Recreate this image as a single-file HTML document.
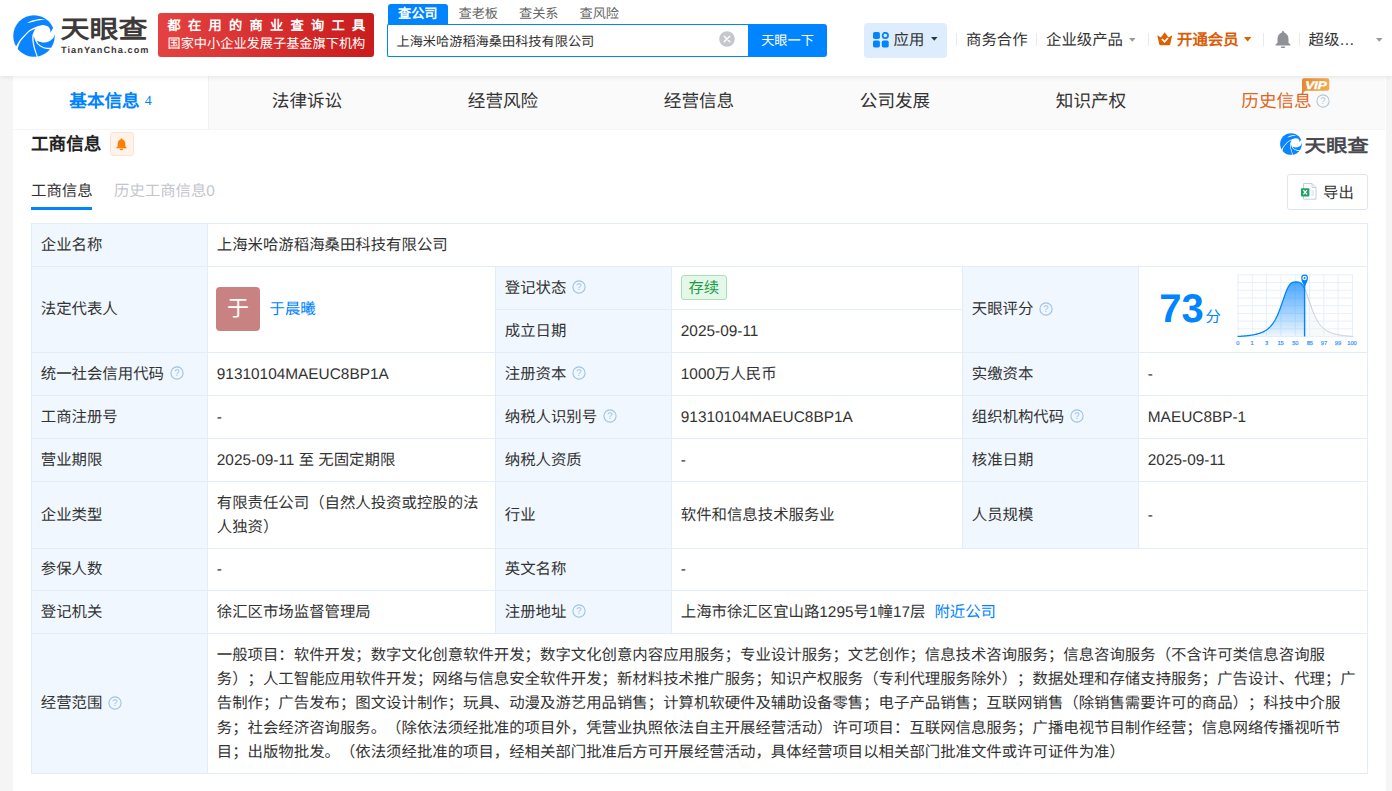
<!DOCTYPE html>
<html lang="zh-CN">
<head>
<meta charset="utf-8">
<title>天眼查</title>
<style>
*{box-sizing:border-box;margin:0;padding:0}
html,body{width:1392px;height:791px;overflow:hidden}
body{font-family:"Liberation Sans",sans-serif;background:#f5f5f5;color:#333;font-size:15.4px;position:relative;text-spacing-trim:space-all;text-rendering:geometricPrecision}
.abs{position:absolute}
.nw{white-space:nowrap}
#hdr{position:absolute;left:0;top:0;width:1392px;height:76px;background:#fff;box-shadow:0 1px 5px rgba(0,0,0,.09);z-index:5}
#hdr .nav{position:absolute;top:29px;height:24px;line-height:24px;font-size:15.4px;color:#333;white-space:nowrap}
#hdr .sep{position:absolute;top:33px;width:1px;height:13px;background:#e6e9ee}
.stab{position:absolute;top:4px;width:60.5px;height:20px;line-height:19px;text-align:center;font-size:13.2px;color:#666;white-space:nowrap}
.stab.on{background:#0084ff;color:#fff;font-weight:bold;border-radius:3px 3px 0 0}
#card{position:absolute;left:13px;top:76px;width:1373px;height:715px;background:#fff}
#tabs{position:absolute;left:0;top:0;width:1372px;height:52.5px;background:#fafafa;display:flex;box-shadow:0 1px 0 #f6f6f6}
#tabs .t{width:196px;height:52.5px;line-height:50px;text-align:center;font-size:17.6px;color:#333;white-space:nowrap}
#tabs .t.on{background:#fff;color:#0084ff;font-weight:bold;border-right:1px solid #f1f1f1}
#tabs .t.on small{font-family:"Liberation Serif",serif;font-weight:normal;font-size:14px;margin-left:5px;position:relative;top:-2px}
#tabs .t.vip{color:#e0661a}
h2{position:absolute;left:18px;top:56px;font-size:17.6px;line-height:24px;font-weight:bold;color:#222;white-space:nowrap}
table{position:absolute;left:18px;top:147px;width:1336px;border-collapse:collapse;table-layout:fixed}
td{border:1px solid #e3edf7;padding:2px 8.8px 0;font-size:15.4px;line-height:24.2px;color:#333;vertical-align:middle;background:#fff}
td.l{background:#f0f7fe}
.q{display:inline-block;margin-left:6px;vertical-align:-1.5px}
a{color:#0084ff;text-decoration:none}
.tag{display:inline-block;width:46px;height:25px;line-height:25.5px;text-align:center;border:1px solid #a9e0b9;background:#e4f8ea;color:#1d9c45;border-radius:3px;font-size:15.4px;vertical-align:middle;position:relative;top:-2px}
</style>
</head>
<body>
<svg width="0" height="0" style="position:absolute"><defs><symbol id="lg" viewBox="0 0 42 42"><clipPath id="lgc"><circle cx="21" cy="21" r="20.75"/></clipPath><g clip-path="url(#lgc)" fill="#0a85ff"><path d="M2.12,33.37C2.83,32.11 4.91,27.94 6.39,25.80C7.87,23.66 9.36,22.29 11.00,20.54C12.64,18.79 14.40,16.65 16.26,15.28C18.13,13.91 20.48,13.06 22.18,12.32C23.88,11.57 24.98,11.16 26.46,10.80C27.94,10.44 29.62,10.02 31.07,10.14C32.51,10.27 34.14,10.78 35.14,11.53C36.15,12.27 36.72,13.61 37.12,14.62C37.51,15.63 37.45,17.09 37.51,17.58L37.51,17.58C37.73,17.20 38.37,16.08 38.83,15.28C39.29,14.48 39.71,13.87 40.28,12.78C40.85,11.68 41.92,9.38 42.25,8.70L46.20,8.70L46.20,-4.46L-5.12,-4.46L-5.12,36.33Z"/><path d="M4.09,35.01C4.63,33.63 6.04,28.99 7.32,26.72C8.59,24.45 10.12,23.14 11.72,21.39C13.32,19.65 15.14,17.55 16.92,16.26C18.70,14.98 21.47,14.12 22.38,13.70L22.38,13.83C22.02,14.51 20.74,16.57 20.21,17.91C19.68,19.25 19.30,20.10 19.22,21.86C19.15,23.61 19.39,26.24 19.75,28.43C20.11,30.63 20.71,32.77 21.39,35.01C22.07,37.26 23.42,40.77 23.83,41.92L23.63,46.86L-1.17,46.86L-1.17,35.01Z"/><path d="M20.67,20.87C20.68,21.91 20.45,24.87 20.74,27.12C21.02,29.37 21.68,31.89 22.38,34.36C23.08,36.82 24.52,40.66 24.95,41.92L25.14,46.86L42.25,46.86L42.25,35.01L38.30,34.49C37.32,34.38 34.14,34.27 32.38,33.83C30.63,33.39 29.20,32.75 27.78,31.86C26.35,30.96 24.82,29.66 23.83,28.43C22.84,27.21 22.37,25.75 21.86,24.49C21.34,23.23 20.92,21.47 20.74,20.87Z"/><path d="M23.83,25.47C24.16,25.66 24.71,26.24 25.80,26.59C26.90,26.94 28.76,27.60 30.41,27.58C32.05,27.56 34.14,27.09 35.67,26.46C37.21,25.84 38.58,25.04 39.62,23.83C40.66,22.62 41.54,19.99 41.92,19.22L46.20,19.22L46.20,35.01L38.30,35.01L38.30,32.84C37.64,32.82 35.78,32.90 34.36,32.71C32.93,32.52 31.18,32.33 29.75,31.72C28.32,31.12 26.79,30.13 25.80,29.09C24.82,28.05 24.16,26.08 23.83,25.47Z"/><path d="M13.96,8.04C14.51,7.74 16.04,6.78 17.25,6.26C18.46,5.75 19.66,5.32 21.20,4.95C22.73,4.57 24.54,4.20 26.46,4.03C28.38,3.85 31.67,3.92 32.71,3.89L32.71,4.03C31.67,4.23 28.38,4.87 26.46,5.28C24.54,5.68 22.73,6.09 21.20,6.46C19.66,6.83 18.46,7.25 17.25,7.51C16.04,7.78 14.51,7.95 13.96,8.04Z" fill="#fff"/></g></symbol></defs></svg>
<div id="hdr">
  <svg class="abs" style="left:13px;top:14.5px" width="42" height="42"><use href="#lg"/></svg>
  <div class="abs nw" id="lgt" style="left:60.5px;top:11.3px;font-size:29px;line-height:38px;font-weight:bold;color:#3e3a39;transform-origin:0 50%;transform:scale(1,.86)">天眼查</div>
  <div class="abs nw" id="lgs" style="left:61px;top:43.6px;font-size:9.2px;line-height:12px;font-weight:bold;color:#3e3a39;letter-spacing:1.05px">TianYanCha.com</div>
  <div class="abs" style="left:158px;top:13px;width:216px;height:44px;border-radius:3px;background:linear-gradient(90deg,#e44242,#ca1c1c);color:#fff;font-size:13.2px;white-space:nowrap">
    <div class="abs" style="left:9.5px;top:3.5px;line-height:17px;font-weight:bold;letter-spacing:7.3px">都在用的商业查询工具</div>
    <div class="abs" style="left:9.5px;top:21.5px;line-height:17px">国家中小企业发展子基金旗下机构</div>
  </div>
  <div class="stab on" style="left:387.5px">查公司</div>
  <div class="stab" style="left:448px">查老板</div>
  <div class="stab" style="left:508.5px">查关系</div>
  <div class="stab" style="left:569px">查风险</div>
  <div class="abs nw" style="left:387px;top:24px;width:362px;height:33px;border:1.5px solid #0084ff;border-right:0;border-radius:2px 0 0 2px;background:#fff;font-size:13.2px;line-height:33.5px;padding-left:8.5px;color:#333">上海米哈游稻海桑田科技有限公司</div>
  <svg class="abs" style="left:718.8px;top:31.2px" width="16" height="16" viewBox="0 0 16 16"><circle cx="8" cy="8" r="7.8" fill="#c6c7cc"/><path d="M5.2,5.2L10.8,10.8M10.8,5.2L5.2,10.8" stroke="#fff" stroke-width="1.4" stroke-linecap="round"/></svg>
  <div class="abs nw" style="left:748px;top:24px;width:79px;height:33px;background:#0084ff;border-radius:0 3px 3px 0;color:#fff;font-size:13.2px;line-height:34px;text-align:center">天眼一下</div>

  <div class="abs" style="left:864px;top:23px;width:83px;height:35px;border-radius:4px;background:#deedfd"></div>
  <svg class="abs" style="left:873.3px;top:32.4px" width="16" height="16" viewBox="0 0 16 16"><rect x="0" y="0" width="6.9" height="6.9" rx="1.7" fill="#0084ff"/><rect x="0" y="8.6" width="6.9" height="6.9" rx="1.7" fill="#0084ff"/><rect x="8.8" y="8.6" width="6.9" height="6.9" rx="1.7" fill="#0084ff"/><circle cx="12.3" cy="3.5" r="2.7" fill="none" stroke="#0084ff" stroke-width="1.8"/></svg>
  <div class="nav" style="left:893.5px">应用</div>
  <svg class="abs" style="left:930.8px;top:37.3px" width="7" height="4" viewBox="0 0 7 4"><path d="M0,0H6.6L3.3,3.8Z" fill="#333"/></svg>
  <div class="sep" style="left:956px"></div>
  <div class="nav" style="left:966px">商务合作</div>
  <div class="sep" style="left:1036px"></div>
  <div class="nav" style="left:1046px">企业级产品</div>
  <svg class="abs" style="left:1128.5px;top:37.5px" width="7" height="4" viewBox="0 0 7 4"><path d="M0,0H6.6L3.3,3.8Z" fill="#999"/></svg>
  <div class="sep" style="left:1147.5px"></div>
  <svg class="abs" style="left:1157px;top:32px" width="16" height="14" viewBox="0 0 16 14"><path d="M0.3,3.2 L3.9,5.4 L7.7,0.2 L11.5,5.4 L15.2,3.2 L13.3,12 Q13.1,13.2 12,13.2 H3.5 Q2.4,13.2 2.2,12Z" fill="#dc6000"/><path d="M4.9,7 L7.6,9.7 L10.9,6" fill="none" stroke="#fff" stroke-width="1.7"/></svg>
  <div class="nav" style="left:1177px;font-weight:bold;color:#d95f0a">开通会员</div>
  <svg class="abs" style="left:1243.8px;top:37.3px" width="8" height="5" viewBox="0 0 8 5"><path d="M0,0H7.4L3.7,4.4Z" fill="#dc6000"/></svg>
  <div class="sep" style="left:1263px"></div>
  <svg class="abs" style="left:1274.5px;top:31px" width="16" height="17.5" viewBox="0 0 16 17.5"><path d="M8,0 a1.1,1.1 0 0 1 1.1,1.1 v0.5 C12,2.4 13.5,5 13.5,8 V11.8 L15.4,13.6 V14.4 H0.6 V13.6 L2.5,11.8 V8 C2.5,5 4,2.4 6.9,1.6 v-0.5 A1.1,1.1 0 0 1 8,0Z" fill="#8e9297"/><rect x="5.8" y="15.6" width="4.4" height="1.4" rx=".7" fill="#8e9297"/></svg>
  <div class="sep" style="left:1299px"></div>
  <div class="nav" style="left:1308.5px">超级<span lang="en" style="font-family:'Liberation Sans'">&#8230;</span></div>
  <svg class="abs" style="left:1375.5px;top:37.5px" width="7" height="4" viewBox="0 0 7 4"><path d="M0,0H6.6L3.3,3.8Z" fill="#999"/></svg>
</div>
<div id="card">
  <div id="tabs">
    <div class="t on">基本信息<small>4</small></div>
    <div class="t">法律诉讼</div>
    <div class="t">经营风险</div>
    <div class="t">经营信息</div>
    <div class="t">公司发展</div>
    <div class="t">知识产权</div>
    <div class="t vip"><span style="position:relative;left:-10.5px">历史信息</span></div>
  </div>
  <h2>工商信息</h2>
  <div class="abs" style="left:97px;top:56px;width:24px;height:24px;border:1px solid #fde3cf;background:#fff3e9;border-radius:3px"></div>
  <svg class="abs" style="left:103px;top:62px" width="11" height="12.5" viewBox="0 0 16 17.5"><path d="M8,0 a1.1,1.1 0 0 1 1.1,1.1 v0.5 C12,2.4 13.5,5 13.5,8 V11.8 L15.4,13.6 V14.4 H0.6 V13.6 L2.5,11.8 V8 C2.5,5 4,2.4 6.9,1.6 v-0.5 A1.1,1.1 0 0 1 8,0Z" fill="#ff7d00"/><path d="M5.4,15.2 H10.6 A2.6,2.3 0 0 1 5.4,15.2Z" fill="#ff7d00"/></svg>
  <div class="abs nw" style="left:18px;top:103.5px;line-height:24px;font-size:15.4px;color:#333">工商信息</div>
  <div class="abs" style="left:18px;top:131px;width:61px;height:3px;background:#0084ff"></div>
  <div class="abs nw" style="left:101px;top:103.5px;line-height:24px;font-size:15.4px;color:#c3c6cc">历史工商信息0</div>
  <div class="abs nw" style="left:1274px;top:98px;width:81px;height:36px;border:1px solid #dfe4ee;border-radius:3px;font-size:15.4px;line-height:37.5px;padding-left:35px;color:#333">导出</div>
  <svg class="abs" style="left:1288.3px;top:107px" width="16" height="17" viewBox="0 0 16 17"><path d="M2.5,0.5 H11 L15,4.5 V16.2 H2.5Z" fill="#fff" stroke="#c9ced6" stroke-width="1"/><path d="M11,0.5 V4.5 H15" fill="none" stroke="#c9ced6" stroke-width="1"/><path d="M10.5,8H13M10.5,10H13M10.5,12H13" stroke="#d5d9e0" stroke-width="1"/><rect x="0" y="5.2" width="8.4" height="8.2" rx=".6" fill="#21a366"/><path d="M2.4,7.2L6,11.4M6,7.2L2.4,11.4" stroke="#fff" stroke-width="1.3"/></svg>
  <svg class="abs" style="left:1267px;top:57px" width="22" height="22"><use href="#lg"/></svg>
  <div class="abs nw" id="wmt" style="left:1291.5px;top:55.5px;font-size:21.4px;line-height:28px;font-weight:bold;color:#4a4a50;transform-origin:0 50%;transform:scale(1,.84)">天眼查</div>
  <table>
    <colgroup><col style="width:176px"><col style="width:288px"><col style="width:176px"><col style="width:291px"><col style="width:176px"><col style="width:229px"></colgroup>
    <tr style="height:43px"><td class="l">企业名称</td><td colspan="5">上海米哈游稻海桑田科技有限公司</td></tr>
    <tr style="height:43px"><td class="l" rowspan="2">法定代表人</td><td rowspan="2"></td><td class="l">登记状态<svg class="q" width="14" height="14" viewBox="0 0 14 14"><circle cx="7" cy="7" r="6.1" fill="none" stroke="#9dc3e6" stroke-width="1.1"/><text x="7" y="10.4" text-anchor="middle" font-family="Liberation Sans, sans-serif" font-size="9.5" fill="#9dc3e6">?</text></svg></td><td><span class="tag">存续</span></td><td class="l" rowspan="2">天眼评分<svg class="q" width="14" height="14" viewBox="0 0 14 14"><circle cx="7" cy="7" r="6.1" fill="none" stroke="#9dc3e6" stroke-width="1.1"/><text x="7" y="10.4" text-anchor="middle" font-family="Liberation Sans, sans-serif" font-size="9.5" fill="#9dc3e6">?</text></svg></td><td rowspan="2"></td></tr>
    <tr style="height:43px"><td class="l">成立日期</td><td>2025-09-11</td></tr>
    <tr style="height:43px"><td class="l">统一社会信用代码<svg class="q" width="14" height="14" viewBox="0 0 14 14"><circle cx="7" cy="7" r="6.1" fill="none" stroke="#9dc3e6" stroke-width="1.1"/><text x="7" y="10.4" text-anchor="middle" font-family="Liberation Sans, sans-serif" font-size="9.5" fill="#9dc3e6">?</text></svg></td><td>91310104MAEUC8BP1A</td><td class="l">注册资本<svg class="q" width="14" height="14" viewBox="0 0 14 14"><circle cx="7" cy="7" r="6.1" fill="none" stroke="#9dc3e6" stroke-width="1.1"/><text x="7" y="10.4" text-anchor="middle" font-family="Liberation Sans, sans-serif" font-size="9.5" fill="#9dc3e6">?</text></svg></td><td>1000万人民币</td><td class="l">实缴资本</td><td>-</td></tr>
    <tr style="height:43px"><td class="l">工商注册号</td><td>-</td><td class="l">纳税人识别号<svg class="q" width="14" height="14" viewBox="0 0 14 14"><circle cx="7" cy="7" r="6.1" fill="none" stroke="#9dc3e6" stroke-width="1.1"/><text x="7" y="10.4" text-anchor="middle" font-family="Liberation Sans, sans-serif" font-size="9.5" fill="#9dc3e6">?</text></svg></td><td>91310104MAEUC8BP1A</td><td class="l">组织机构代码<svg class="q" width="14" height="14" viewBox="0 0 14 14"><circle cx="7" cy="7" r="6.1" fill="none" stroke="#9dc3e6" stroke-width="1.1"/><text x="7" y="10.4" text-anchor="middle" font-family="Liberation Sans, sans-serif" font-size="9.5" fill="#9dc3e6">?</text></svg></td><td>MAEUC8BP-1</td></tr>
    <tr style="height:43px"><td class="l">营业期限</td><td>2025-09-11 至 无固定期限</td><td class="l">纳税人资质</td><td>-</td><td class="l">核准日期</td><td>2025-09-11</td></tr>
    <tr style="height:67px"><td class="l">企业类型</td><td>有限责任公司（自然人投资或控股的法人独资）</td><td class="l">行业</td><td>软件和信息技术服务业</td><td class="l">人员规模</td><td>-</td></tr>
    <tr style="height:42px"><td class="l">参保人数</td><td>-</td><td class="l">英文名称</td><td colspan="3">-</td></tr>
    <tr style="height:43px"><td class="l">登记机关</td><td>徐汇区市场监督管理局</td><td class="l">注册地址<svg class="q" width="14" height="14" viewBox="0 0 14 14"><circle cx="7" cy="7" r="6.1" fill="none" stroke="#9dc3e6" stroke-width="1.1"/><text x="7" y="10.4" text-anchor="middle" font-family="Liberation Sans, sans-serif" font-size="9.5" fill="#9dc3e6">?</text></svg></td><td colspan="3">上海市徐汇区宜山路1295号1幢17层<a style="margin-left:9px">附近公司</a></td></tr>
    <tr style="height:140px"><td class="l">经营范围<svg class="q" width="14" height="14" viewBox="0 0 14 14"><circle cx="7" cy="7" r="6.1" fill="none" stroke="#9dc3e6" stroke-width="1.1"/><text x="7" y="10.4" text-anchor="middle" font-family="Liberation Sans, sans-serif" font-size="9.5" fill="#9dc3e6">?</text></svg></td><td colspan="5">一般项目：软件开发；数字文化创意软件开发；数字文化创意内容应用服务；专业设计服务；文艺创作；信息技术咨询服务；信息咨询服务（不含许可类信息咨询服务）；人工智能应用软件开发；网络与信息安全软件开发；新材料技术推广服务；知识产权服务（专利代理服务除外）；数据处理和存储支持服务；广告设计、代理；广告制作；广告发布；图文设计制作；玩具、动漫及游艺用品销售；计算机软硬件及辅助设备零售；电子产品销售；互联网销售（除销售需要许可的商品）；科技中介服务；社会经济咨询服务。（除依法须经批准的项目外，凭营业执照依法自主开展经营活动）许可项目：互联网信息服务；广播电视节目制作经营；信息网络传播视听节目；出版物批发。（依法须经批准的项目，经相关部门批准后方可开展经营活动，具体经营项目以相关部门批准文件或许可证件为准）</td></tr>
  </table>
</div>
<div id="ov" class="abs" style="left:0;top:0;width:1392px;height:791px;pointer-events:none">
  <div class="abs" style="left:216px;top:287px;width:44px;height:44px;border-radius:4px;background:#c98282;color:#fff;font-size:22px;line-height:43px;text-align:center">于</div>
  <a class="abs nw" style="left:269.5px;top:297.5px;line-height:24px;font-size:15.4px">于晨曦</a>
  <div class="abs nw" style="left:1159.3px;top:285.6px;font-size:40px;line-height:46px;font-weight:bold;color:#0084ff">73</div>
  <div class="abs nw" style="left:1205.5px;top:305.5px;font-size:15.4px;line-height:24px;color:#0084ff">分</div>
  <svg class="abs" style="left:1230px;top:270px" width="135" height="80" viewBox="0 0 135 80">
<defs><linearGradient id="g1" x1="0" y1="0" x2="0" y2="1"><stop offset="0" stop-color="#0084ff" stop-opacity=".72"/><stop offset="1" stop-color="#0084ff" stop-opacity=".07"/></linearGradient></defs>
<g stroke="#e6f0fb" stroke-width="1" fill="none"><path d="M8.0,4.5V66.5"/><path d="M22.3,4.5V66.5"/><path d="M36.6,4.5V66.5"/><path d="M50.9,4.5V66.5"/><path d="M65.2,4.5V66.5"/><path d="M79.5,4.5V66.5"/><path d="M93.8,4.5V66.5"/><path d="M108.1,4.5V66.5"/><path d="M122.4,4.5V66.5"/><path d="M7.0,4.8H123.3"/><path d="M7.0,12.5H123.3"/><path d="M7.0,20.2H123.3"/><path d="M7.0,28.0H123.3"/><path d="M7.0,35.7H123.3"/><path d="M7.0,43.4H123.3"/><path d="M7.0,51.1H123.3"/><path d="M7.0,58.8H123.3"/><path d="M7.0,66.6H123.3"/></g>
<path d="M74.60,18.72 L75.10,19.83 L75.60,21.02 L76.11,22.28 L76.61,23.60 L77.11,24.97 L77.61,26.38 L78.11,27.82 L78.62,29.28 L79.12,30.75 L79.62,32.22 L80.12,33.69 L80.62,35.13 L81.13,36.56 L81.63,37.95 L82.13,39.31 L82.63,40.62 L83.14,41.90 L83.64,43.13 L84.14,44.31 L84.64,45.45 L85.14,46.53 L85.65,47.57 L86.15,48.56 L86.65,49.50 L87.15,50.39 L87.65,51.24 L88.16,52.05 L88.66,52.81 L89.16,53.53 L89.66,54.22 L90.16,54.86 L90.67,55.47 L91.17,56.05 L91.67,56.60 L92.17,57.12 L92.67,57.60 L93.18,58.07 L93.68,58.50 L94.18,58.92 L94.68,59.31 L95.18,59.67 L95.69,60.02 L96.19,60.35 L96.69,60.67 L97.19,60.96 L97.69,61.24 L98.20,61.51 L98.70,61.76 L99.20,62.00 L99.70,62.23 L100.21,62.44 L100.71,62.65 L101.21,62.84 L101.71,63.02 L102.21,63.20 L102.72,63.37 L103.22,63.53 L103.72,63.68 L104.22,63.82 L104.72,63.96 L105.23,64.09 L105.73,64.21 L106.23,64.33 L106.73,64.44 L107.23,64.55 L107.74,64.66 L108.24,64.75 L108.74,64.85 L109.24,64.94 L109.74,65.03 L110.25,65.11 L110.75,65.19 L111.25,65.26 L111.75,65.34 L112.25,65.40 L112.76,65.47 L113.26,65.54 L113.76,65.60 L114.26,65.66 L114.76,65.71 L115.27,65.77 L115.77,65.82 L116.27,65.87 L116.77,65.92 L117.28,65.96 L117.78,66.01 L118.28,66.05 L118.78,66.09 L119.28,66.13 L119.79,66.17 L120.29,66.21 L120.79,66.25 L121.29,66.28 L121.79,66.31 L122.30,66.35 L122.80,66.38 L123.30,66.41 L74.6,66.5Z" fill="#eef1f6" fill-opacity=".45" stroke="none"/>
<path d="M74.60,18.72 L75.10,19.83 L75.60,21.02 L76.11,22.28 L76.61,23.60 L77.11,24.97 L77.61,26.38 L78.11,27.82 L78.62,29.28 L79.12,30.75 L79.62,32.22 L80.12,33.69 L80.62,35.13 L81.13,36.56 L81.63,37.95 L82.13,39.31 L82.63,40.62 L83.14,41.90 L83.64,43.13 L84.14,44.31 L84.64,45.45 L85.14,46.53 L85.65,47.57 L86.15,48.56 L86.65,49.50 L87.15,50.39 L87.65,51.24 L88.16,52.05 L88.66,52.81 L89.16,53.53 L89.66,54.22 L90.16,54.86 L90.67,55.47 L91.17,56.05 L91.67,56.60 L92.17,57.12 L92.67,57.60 L93.18,58.07 L93.68,58.50 L94.18,58.92 L94.68,59.31 L95.18,59.67 L95.69,60.02 L96.19,60.35 L96.69,60.67 L97.19,60.96 L97.69,61.24 L98.20,61.51 L98.70,61.76 L99.20,62.00 L99.70,62.23 L100.21,62.44 L100.71,62.65 L101.21,62.84 L101.71,63.02 L102.21,63.20 L102.72,63.37 L103.22,63.53 L103.72,63.68 L104.22,63.82 L104.72,63.96 L105.23,64.09 L105.73,64.21 L106.23,64.33 L106.73,64.44 L107.23,64.55 L107.74,64.66 L108.24,64.75 L108.74,64.85 L109.24,64.94 L109.74,65.03 L110.25,65.11 L110.75,65.19 L111.25,65.26 L111.75,65.34 L112.25,65.40 L112.76,65.47 L113.26,65.54 L113.76,65.60 L114.26,65.66 L114.76,65.71 L115.27,65.77 L115.77,65.82 L116.27,65.87 L116.77,65.92 L117.28,65.96 L117.78,66.01 L118.28,66.05 L118.78,66.09 L119.28,66.13 L119.79,66.17 L120.29,66.21 L120.79,66.25 L121.29,66.28 L121.79,66.31 L122.30,66.35 L122.80,66.38 L123.30,66.41" fill="none" stroke="#c3cbd6" stroke-width="1"/>
<path d="M7.60,66.47 L8.10,66.44 L8.60,66.41 L9.10,66.38 L9.60,66.35 L10.10,66.32 L10.60,66.29 L11.10,66.25 L11.60,66.22 L12.10,66.18 L12.60,66.14 L13.10,66.10 L13.60,66.06 L14.10,66.02 L14.60,65.98 L15.10,65.93 L15.60,65.88 L16.10,65.83 L16.60,65.78 L17.10,65.73 L17.60,65.67 L18.10,65.61 L18.60,65.55 L19.10,65.49 L19.60,65.42 L20.10,65.36 L20.60,65.28 L21.10,65.21 L21.60,65.13 L22.10,65.05 L22.60,64.97 L23.10,64.88 L23.60,64.78 L24.10,64.69 L24.60,64.59 L25.10,64.48 L25.60,64.37 L26.10,64.25 L26.60,64.13 L27.10,64.00 L27.60,63.87 L28.10,63.73 L28.60,63.58 L29.10,63.43 L29.60,63.26 L30.10,63.09 L30.60,62.91 L31.10,62.72 L31.60,62.52 L32.10,62.31 L32.60,62.09 L33.10,61.86 L33.60,61.61 L34.10,61.35 L34.60,61.08 L35.10,60.79 L35.60,60.49 L36.10,60.17 L36.60,59.83 L37.10,59.47 L37.60,59.09 L38.10,58.69 L38.60,58.26 L39.10,57.82 L39.60,57.34 L40.10,56.84 L40.60,56.31 L41.10,55.75 L41.60,55.15 L42.10,54.53 L42.60,53.86 L43.10,53.16 L43.60,52.42 L44.10,51.64 L44.60,50.82 L45.10,49.95 L45.60,49.04 L46.10,48.08 L46.60,47.07 L47.10,46.01 L47.60,44.91 L48.10,43.76 L48.60,42.56 L49.10,41.31 L49.60,40.02 L50.10,38.69 L50.60,37.32 L51.10,35.92 L51.60,34.49 L52.10,33.04 L52.60,31.58 L53.10,30.11 L53.60,28.65 L54.10,27.20 L54.60,25.78 L55.10,24.39 L55.60,23.04 L56.10,21.75 L56.60,20.53 L57.10,19.38 L57.60,18.30 L58.10,17.32 L58.60,16.42 L59.10,15.61 L59.60,14.90 L60.10,14.28 L60.60,13.75 L61.10,13.31 L61.60,12.94 L62.10,12.65 L62.60,12.43 L63.10,12.26 L63.60,12.15 L64.10,12.07 L64.60,12.03 L65.10,12.01 L65.60,12.00 L66.10,12.00 L66.60,12.00 L67.10,12.01 L67.60,12.04 L68.10,12.10 L68.60,12.19 L69.10,12.32 L69.60,12.51 L70.10,12.76 L70.60,13.08 L71.10,13.47 L71.60,13.95 L72.10,14.52 L72.60,15.17 L73.10,15.92 L73.60,16.77 L74.10,17.70 L74.60,18.72 L74.6,66.5 L7.6,66.5Z" fill="url(#g1)" stroke="none"/>
<path d="M7.60,66.47 L8.10,66.44 L8.60,66.41 L9.10,66.38 L9.60,66.35 L10.10,66.32 L10.60,66.29 L11.10,66.25 L11.60,66.22 L12.10,66.18 L12.60,66.14 L13.10,66.10 L13.60,66.06 L14.10,66.02 L14.60,65.98 L15.10,65.93 L15.60,65.88 L16.10,65.83 L16.60,65.78 L17.10,65.73 L17.60,65.67 L18.10,65.61 L18.60,65.55 L19.10,65.49 L19.60,65.42 L20.10,65.36 L20.60,65.28 L21.10,65.21 L21.60,65.13 L22.10,65.05 L22.60,64.97 L23.10,64.88 L23.60,64.78 L24.10,64.69 L24.60,64.59 L25.10,64.48 L25.60,64.37 L26.10,64.25 L26.60,64.13 L27.10,64.00 L27.60,63.87 L28.10,63.73 L28.60,63.58 L29.10,63.43 L29.60,63.26 L30.10,63.09 L30.60,62.91 L31.10,62.72 L31.60,62.52 L32.10,62.31 L32.60,62.09 L33.10,61.86 L33.60,61.61 L34.10,61.35 L34.60,61.08 L35.10,60.79 L35.60,60.49 L36.10,60.17 L36.60,59.83 L37.10,59.47 L37.60,59.09 L38.10,58.69 L38.60,58.26 L39.10,57.82 L39.60,57.34 L40.10,56.84 L40.60,56.31 L41.10,55.75 L41.60,55.15 L42.10,54.53 L42.60,53.86 L43.10,53.16 L43.60,52.42 L44.10,51.64 L44.60,50.82 L45.10,49.95 L45.60,49.04 L46.10,48.08 L46.60,47.07 L47.10,46.01 L47.60,44.91 L48.10,43.76 L48.60,42.56 L49.10,41.31 L49.60,40.02 L50.10,38.69 L50.60,37.32 L51.10,35.92 L51.60,34.49 L52.10,33.04 L52.60,31.58 L53.10,30.11 L53.60,28.65 L54.10,27.20 L54.60,25.78 L55.10,24.39 L55.60,23.04 L56.10,21.75 L56.60,20.53 L57.10,19.38 L57.60,18.30 L58.10,17.32 L58.60,16.42 L59.10,15.61 L59.60,14.90 L60.10,14.28 L60.60,13.75 L61.10,13.31 L61.60,12.94 L62.10,12.65 L62.60,12.43 L63.10,12.26 L63.60,12.15 L64.10,12.07 L64.60,12.03 L65.10,12.01 L65.60,12.00 L66.10,12.00 L66.60,12.00 L67.10,12.01 L67.60,12.04 L68.10,12.10 L68.60,12.19 L69.10,12.32 L69.60,12.51 L70.10,12.76 L70.60,13.08 L71.10,13.47 L71.60,13.95 L72.10,14.52 L72.60,15.17 L73.10,15.92 L73.60,16.77 L74.10,17.70 L74.60,18.72" fill="none" stroke="#0084ff" stroke-width="1.3"/>
<path d="M74.6,14.0V66.5" stroke="#0084ff" stroke-width="1.4"/>
<path d="M74.6,17.5 C73.6,14.0 71.2,11.5 71.2,8.0 a3.4,3.4 0 1 1 6.8,0 C78.0,11.5 75.6,14.0 74.6,17.5Z" fill="#0084ff"/>
<circle cx="74.6" cy="8.0" r="2.2" fill="#fff"/><circle cx="74.6" cy="8.0" r="1.05" fill="#0084ff"/>
<g font-family="Liberation Sans, sans-serif" font-size="5.7" fill="#2a90ff" stroke="#2a90ff" stroke-width=".18" text-anchor="middle"><text x="7.8" y="75.2">0</text><text x="22.0" y="75.2">1</text><text x="36.6" y="75.2">3</text><text x="50.6" y="75.2">15</text><text x="65.3" y="75.2">50</text><text x="79.8" y="75.2">85</text><text x="94.0" y="75.2">97</text><text x="108.0" y="75.2">99</text><text x="122.0" y="75.2">100</text></g>
</svg>
  <svg class="abs" style="left:1301px;top:78px" width="29" height="16" viewBox="0 0 29 16"><defs><linearGradient id="g2" x1="0" y1="0" x2="1" y2="0"><stop offset="0" stop-color="#e48a2c"/><stop offset="1" stop-color="#f2ad55"/></linearGradient></defs><path d="M3,0.3 H26 Q28.3,0.3 28.3,2.6 V10.4 Q28.3,12.7 26,12.7 H4.6 L1,15.6 V2.3 Q1,0.3 3,0.3Z" fill="url(#g2)"/><text x="4.2" y="10.6" textLength="21.5" lengthAdjust="spacingAndGlyphs" font-family="Liberation Sans, sans-serif" font-size="11" font-weight="bold" font-style="italic" fill="#fff" stroke="#fff" stroke-width=".4">VIP</text></svg>
  <svg class="abs" style="left:1316.3px;top:93.8px" width="14" height="14" viewBox="0 0 14 14"><circle cx="7" cy="7" r="6.1" fill="none" stroke="#b3c7da" stroke-width="1.1"/><text x="7" y="10.4" text-anchor="middle" font-family="Liberation Sans, sans-serif" font-size="9.5" fill="#b3c7da">?</text></svg>
</div>
</body>
</html>
